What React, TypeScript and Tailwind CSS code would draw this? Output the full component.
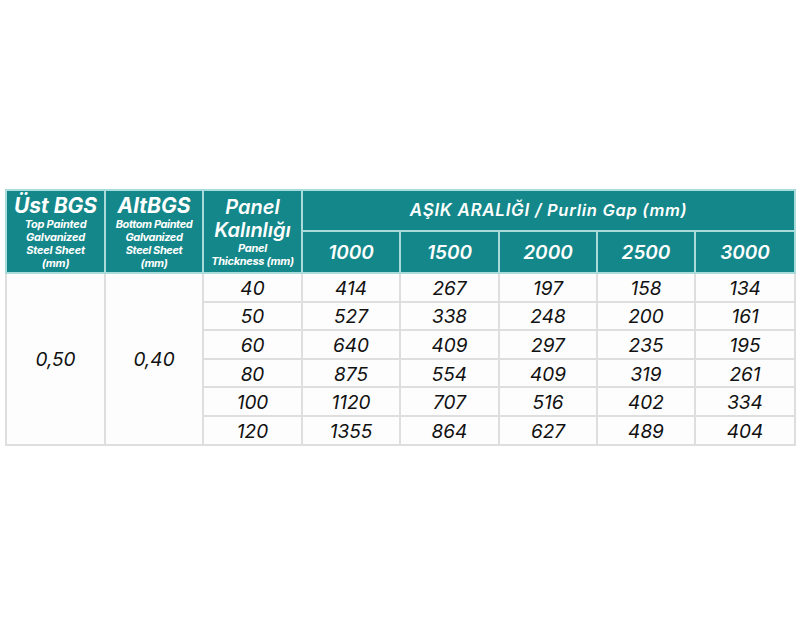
import React from "react";

const cols = ["1000", "1500", "2000", "2500", "3000"];
const rows: [string, string[]][] = [
  ["40", ["414", "267", "197", "158", "134"]],
  ["50", ["527", "338", "248", "200", "161"]],
  ["60", ["640", "409", "297", "235", "195"]],
  ["80", ["875", "554", "409", "319", "261"]],
  ["100", ["1120", "707", "516", "402", "334"]],
  ["120", ["1355", "864", "627", "489", "404"]],
];

const th = "bg-[#14878a] text-white italic border-2 border-[#a9dbda] text-center align-middle p-0";
const td = "border-2 border-[#dedede] bg-[#fdfdfd] text-center align-middle p-0 pt-[2px] text-[19px] italic font-normal text-[#111] h-[28.6px] leading-none";

export default function App() {
  return (
    <div className="w-[800px] h-[640px] bg-white pt-[189px] pl-[5px]" style={{ fontFamily: "Inter, 'Open Sans', sans-serif" }}>
      <table className="border-collapse table-fixed w-[789px]">
        <colgroup>
          <col className="w-[99px]" />
          <col className="w-[98px]" />
          <col className="w-[99px]" />
          <col className="w-[98px]" />
          <col className="w-[99px]" />
          <col className="w-[98px]" />
          <col className="w-[98px]" />
          <col className="w-[100px]" />
        </colgroup>
        <thead>
          <tr className="h-[41px]">
            <th rowSpan={2} className={th + " font-bold"}>
              <div className="text-[21px] leading-[24px] pt-[1px]">Üst BGS</div>
              <div className="text-[11px] leading-[13px] tracking-[-0.2px]">Top Painted<br />Galvanized<br />Steel Sheet<br />(mm)</div>
            </th>
            <th rowSpan={2} className={th + " font-bold"}>
              <div className="text-[21px] leading-[24px] pt-[1px]">AltBGS</div>
              <div className="text-[11px] leading-[13px] tracking-[-0.4px]">Bottom Painted<br />Galvanized<br />Steel Sheet<br />(mm)</div>
            </th>
            <th rowSpan={2} className={th + " font-bold"}>
              <div className="text-[20px] leading-[23px] font-semibold">Panel<br />Kalınlığı</div>
              <div className="text-[11px] leading-[13px] tracking-[-0.3px]">Panel<br />Thickness (mm)</div>
            </th>
            <th colSpan={5} className={th + " font-semibold text-[17px] leading-none tracking-[0.7px]"}>
              AŞIK ARALIĞI / <span className="text-[16.5px]">Purlin Gap (mm)</span>
            </th>
          </tr>
          <tr className="h-[42px]">
            {cols.map((c) => (
              <th key={c} className={th + " font-semibold text-[19px] leading-none"}>{c}</th>
            ))}
          </tr>
        </thead>
        <tbody>
          {rows.map(([t, vals], i) => (
            <tr key={t}>
              {i === 0 && (
                <>
                  <td rowSpan={6} className={td}>0,50</td>
                  <td rowSpan={6} className={td}>0,40</td>
                </>
              )}
              <td className={td}>{t}</td>
              {vals.map((v, j) => (
                <td key={j} className={td}>{v}</td>
              ))}
            </tr>
          ))}
        </tbody>
      </table>
    </div>
  );
}
